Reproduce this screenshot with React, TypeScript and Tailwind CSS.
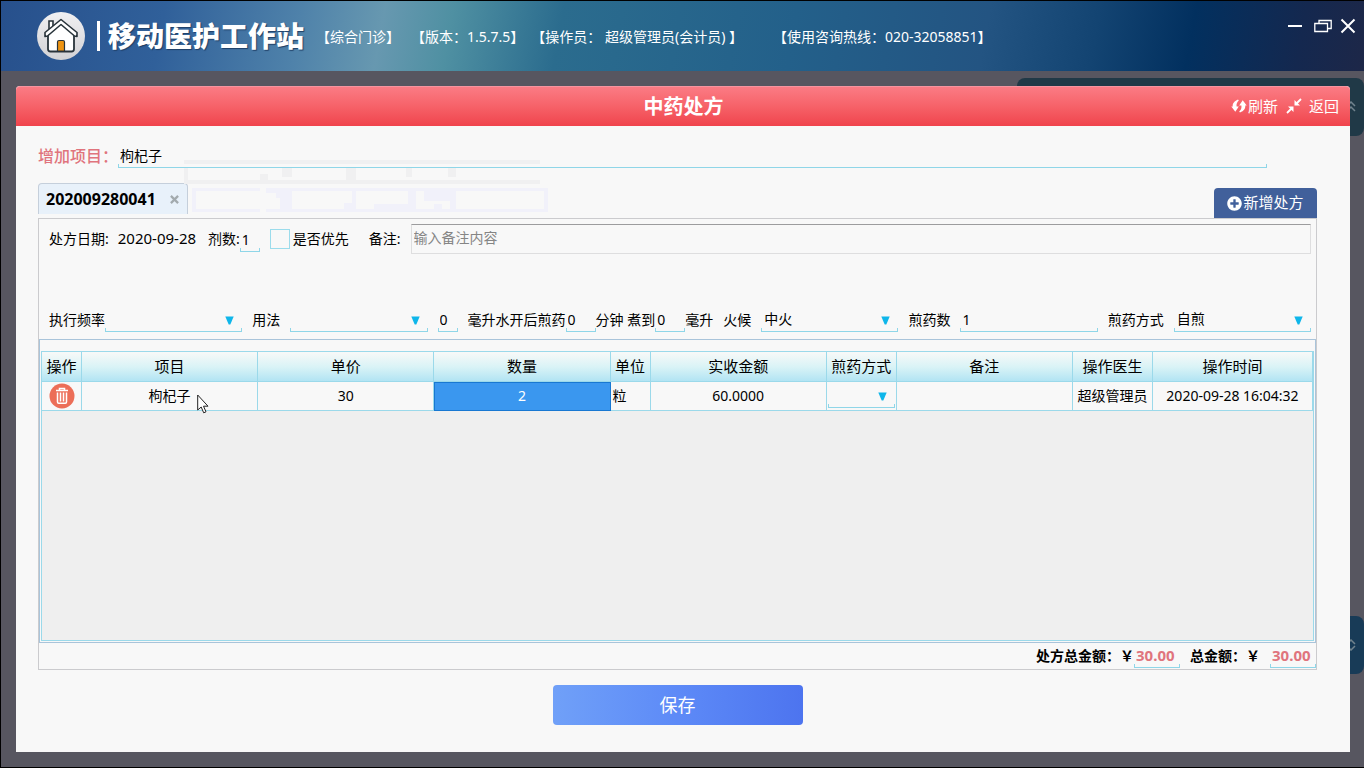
import type { ReactNode, SVGProps } from "react";
import { FaPlusCircle } from "react-icons/fa";

const field = "block w-full min-w-0 bg-transparent pb-[2px] outline-none";

function Underline() {
  return <span aria-hidden className="-mt-1 block h-1 border-x border-b border-[#8fd6e8]" />;
}

function TextField({ id, label, value, className }: { id: string; label: string; value: string; className: string }) {
  return (
    <div className={className}>
      <input id={id} aria-label={label} defaultValue={value} className={`${field} h-6 pl-[2px]`} />
      <Underline />
    </div>
  );
}

function SelectField({ id, label, value = "", className }: { id: string; label: string; value?: string; className: string }) {
  return (
    <div className={`relative ${className}`}>
      <select id={id} aria-label={label} defaultValue={value} className={`${field} h-6 appearance-none pl-[3px]`}>
        <option value={value}>{value}</option>
      </select>
      <Caret className="absolute right-2 top-2" />
      <Underline />
    </div>
  );
}

function Caret({ className }: { className: string }) {
  return (
    <svg viewBox="0 0 9 9" className={`pointer-events-none size-[9px] ${className}`} aria-hidden>
      <path d="M.3.500h8.400L5.300 8.500H3.700z" fill="#0fb6ea" />
    </svg>
  );
}

function HomeIcon(props: SVGProps<SVGSVGElement>) {
  return (
    <svg viewBox="0 0 48 48" aria-hidden {...props}>
      <defs>
        <linearGradient id="disc" x1="0" y1="0" x2="0" y2="1">
          <stop offset="0" stopColor="#f0f0f2" />
          <stop offset="1" stopColor="#d2d2d5" />
        </linearGradient>
      </defs>
      <circle cx="24" cy="24" r="24" fill="url(#disc)" />
      <path d="M12 17V9h4v6" fill="#fff" stroke="#28333a" strokeWidth="1.600" />
      <path d="M11 22v15q0 2.500 2.500 2.500h21q2.500 0 2.500-2.500V22L24 11z" fill="#fff" stroke="#28333a" strokeWidth="1.800" />
      <path d="M8 24.500v-4L24 7.500l16 13v4l-2.500-.5L24 12.500 10.500 24z" fill="#fff" stroke="#28333a" strokeWidth="1.600" strokeLinejoin="round" />
      <path d="M20.500 39V30q0-1.500 1.500-1.500h4q1.500 0 1.500 1.500v9z" fill="#ee9412" stroke="#28333a" strokeWidth="1.200" />
    </svg>
  );
}

function RefreshIcon() {
  return (
    <svg viewBox="0 0 16 16" className="size-4" fill="#fff" aria-hidden>
      <path d="M7 1.500C3 3 1.300 6 1.800 8.500H.3l4 5.300 3.500-5.300H5.600C5.200 6 6 4 7.800 2.500z" />
      <path d="M9 14.500c4-1.500 5.700-4.500 5.200-7h1.500l-4-5.300L8.200 7.500h2.200c.4 2.500-.4 4.500-2.200 6z" />
    </svg>
  );
}

function ShrinkIcon() {
  return (
    <svg viewBox="0 0 16 16" className="size-4" aria-hidden>
      <path d="M15 1l-5 5M1 15l5-5" stroke="#fff" strokeWidth="1.800" />
      <path d="M8.500 2v5.500H14zM7.500 14V8.500H2z" fill="#fff" />
    </svg>
  );
}

function TrashIcon() {
  return (
    <svg viewBox="0 0 26 26" className="size-[26px]" aria-hidden>
      <circle cx="13" cy="13" r="12.500" fill="#ec6e58" />
      <path d="M7 7.500h12M10.500 7V5.500h5V7" fill="none" stroke="#fff" strokeWidth="1.500" />
      <path d="M8.500 9.500v9.500q0 1.200 1.200 1.200h6.600q1.200 0 1.200-1.200V9.500M11.500 9.500v9M14.500 9.500v9" fill="none" stroke="#fff" strokeWidth="1.500" />
    </svg>
  );
}

function TitleBar() {
  return (
    <header className="flex h-[70px] shrink-0 items-center bg-[linear-gradient(100deg,#27508c_0%,#30609a_12%,#4f82aa_22%,#6798b0_28%,#4f90a2_33%,#2b6c8e_41%,#23608a_58%,#235482_72%,#134472_80%,#02305f_87%,#14284f_95%,#1d2748_100%)] pl-9 pr-2 text-sm text-white">
      <HomeIcon className="size-12 shrink-0" />
      <span className="ml-3 h-[30px] w-[3px] bg-white" />
      <h1 className="ml-2 whitespace-nowrap text-[28px] font-black [text-shadow:1px_1px_1px_#1f3f66]">移动医护工作站</h1>
      <p className="ml-2 mt-[2px] flex whitespace-pre">
        <span className="ml-1">【综合门诊】</span>
        <span className="ml-[11px]">【版本：1.5.7.5】</span>
        <span className="ml-[7px]">【操作员： 超级管理员(会计员) 】</span>
        <span className="ml-[30px]">【使用咨询热线：020-32058851】</span>
      </p>
      <div className="mb-5 ml-auto flex items-center gap-3">
        <button aria-label="最小化" className="h-4 w-[14px]">
          <span className="block h-[2px] bg-white" />
        </button>
        <button aria-label="还原">
          <svg viewBox="0 0 18 14" className="block h-[14px] w-[18px]" fill="none" stroke="#fff" strokeWidth="1.300">
            <path d="M.8 4.500h12.700v8H.8zM5 4.500v-3h12.200v8h-3.700" />
          </svg>
        </button>
        <button aria-label="关闭" className="-ml-1">
          <svg viewBox="0 0 16 16" className="block size-4" stroke="#fff" strokeWidth="2">
            <path d="M1.500 1.500l13 13M14.500 1.500l-13 13" />
          </svg>
        </button>
      </div>
    </header>
  );
}

function DecoctionRow() {
  return (
    <div className="flex h-6 items-center whitespace-nowrap">
      <label htmlFor="frequency">执行频率</label>
      <SelectField id="frequency" label="执行频率" className="flex-1" />
      <label htmlFor="usage" className="mx-[10px]">用法</label>
      <SelectField id="usage" label="用法" className="flex-1" />
      <TextField id="water" label="水量" value="0" className="ml-[10px] w-5" />
      <label htmlFor="water" className="ml-[10px]">毫升水开后煎药</label>
      <TextField id="minutes" label="分钟" value="0" className="w-[30px]" />
      <label htmlFor="minutes">分钟 煮到</label>
      <TextField id="volume" label="毫升" value="0" className="w-[30px]" />
      <label htmlFor="volume">毫升</label>
      <label htmlFor="heat" className="mx-[10px]">火候</label>
      <SelectField id="heat" label="火候" value="中火" className="flex-1" />
      <label htmlFor="batches" className="mx-[10px]">煎药数</label>
      <TextField id="batches" label="煎药数" value="1" className="flex-1" />
      <label htmlFor="method" className="mx-[10px]">煎药方式</label>
      <SelectField id="method" label="煎药方式" value="自煎" className="flex-1" />
    </div>
  );
}

const columns = [
  { name: "操作", width: "w-10" },
  { name: "项目", width: "" },
  { name: "单价", width: "" },
  { name: "数量", width: "" },
  { name: "单位", width: "w-10" },
  { name: "实收金额", width: "" },
  { name: "煎药方式", width: "w-[70px]" },
  { name: "备注", width: "" },
  { name: "操作医生", width: "w-20" },
  { name: "操作时间", width: "w-40" },
];

function Cell({ children, className = "" }: { children?: ReactNode; className?: string }) {
  return <td className={`border-b border-r border-[#9bd9ea] p-0 text-center ${className}`}>{children}</td>;
}

function ItemTable() {
  return (
    <table className="w-full table-fixed border-separate border-spacing-0 whitespace-nowrap bg-[#f8f8f8]">
      <thead>
        <tr className="h-[30px] bg-linear-to-b from-[#f8f9f8] via-[#d9f3f6] to-[#afe3f3] text-[15px]">
          {columns.map((column) => (
            <th key={column.name} className={`border-b border-r border-[#9bd9ea] p-0 font-normal ${column.width}`}>{column.name}</th>
          ))}
        </tr>
      </thead>
      <tbody>
        <tr className="h-[29px]">
          <Cell>
            <button aria-label="删除" className="mx-auto block"><TrashIcon /></button>
          </Cell>
          <Cell>枸杞子</Cell>
          <Cell>30</Cell>
          <Cell className="bg-[#3a97ef] text-white outline -outline-offset-1 outline-[#1878d2]">2</Cell>
          <Cell className="pl-[2px] text-left">粒</Cell>
          <Cell>60.0000</Cell>
          <Cell><SelectField id="row-method" label="煎药方式" className="mx-px" /></Cell>
          <Cell />
          <Cell>超级管理员</Cell>
          <Cell>2020-09-28 16:04:32</Cell>
        </tr>
      </tbody>
    </table>
  );
}

function Prescription() {
  return (
    <section className="flex flex-1 flex-col border border-[#cbcbce]">
      <div className="flex items-start whitespace-nowrap pl-[10px] pr-[5px] pt-[5px]">
        <span className="mt-[5px]">处方日期:</span>
        <span className="ml-[9px] mt-1 text-[15px]">2020-09-28</span>
        <label htmlFor="doses" className="ml-3 mt-[5px]">剂数:</label>
        <TextField id="doses" label="剂数" value="1" className="mt-1 w-5" />
        <input id="priority" type="checkbox" className="ml-[10px] mt-[5px] size-5 appearance-none border border-[#9bdcec] bg-[#f8f8f8]" />
        <label htmlFor="priority" className="ml-[3px] mt-[5px]">是否优先</label>
        <label htmlFor="remark" className="ml-5 mt-[5px]">备注:</label>
        <input
          id="remark"
          placeholder="输入备注内容"
          className="ml-[10px] h-[30px] min-w-0 flex-1 border border-[#dededf] border-t-[#9c9c9e] bg-[#f8f8f8] pb-[3px] pl-[2px] placeholder:text-[#858585]"
        />
      </div>
      <div className="mt-[54px] pl-[10px] pr-[5px]">
        <DecoctionRow />
      </div>
      <div className="mt-[7px] flex flex-1 flex-col border border-[#a9c4da] px-px pb-px pt-[11px]">
        <div className="flex-1 border border-[#9bd9ea] bg-[#efefef]">
          <ItemTable />
        </div>
      </div>
      <div className="flex h-[26px] items-center justify-end font-bold">
        <span>处方总金额：￥</span>
        <Amount label="处方总金额" />
        <span className="ml-[10px]">总金额：￥</span>
        <span className="w-[10px]" />
        <Amount label="总金额" />
      </div>
    </section>
  );
}

function Amount({ label }: { label: string }) {
  return (
    <div className="w-[46px]">
      <input readOnly aria-label={label} value="30.00" className={`${field} h-6 pl-[2px] text-[15px] font-bold text-[#e0747d]`} />
      <Underline />
    </div>
  );
}

function Pointer() {
  return (
    <svg viewBox="0 0 12 20" className="pointer-events-none absolute left-[196px] top-[393px] h-5 w-3" aria-hidden>
      <path d="M.7 1v15l3.500-3 2.500 5.800 2.300-1L6.500 12.200H11z" fill="#fff" stroke="#222" />
    </svg>
  );
}

// last frame of the suggestion list while it fades out
function FadingSuggestions() {
  return (
    <svg viewBox="0 0 364 52" className="pointer-events-none absolute left-[183px] top-[159px] h-[52px] w-[364px]" aria-hidden>
      <path d="M0 0h356v4H0zM0 8h4v12h352v4H0zM76 14h8v6h-8zM98 8h10v9H98zM162 8h10v12h-10zM222 8h6v9h-6zM264 8h8v9h-8z" fill="#f0f0f1" />
      <path
        d="M8 28h68v3H12v18h64v3H8zM82 28h282v24H82v-3h14V38h-4v-5H82zM108 31v18h52v-6h8V31zM172 44v5h86v-5h-8v5h-60v-5h34V31h-52zM240 31v10h26v8h-34V31zM272 31v18h88V31z"
        fill="#f1f1fa"
        fillRule="evenodd"
      />
    </svg>
  );
}

function EdgeTab({ className, points }: { className: string; points: string }) {
  return (
    <div aria-hidden className={`absolute right-0 flex h-[58px] items-center justify-end rounded-lg pr-2 ${className}`}>
      <svg viewBox="0 0 10 12" className="h-3 w-[10px]" fill="none" stroke="#71838e" strokeWidth="1.500">
        <path d={points} />
      </svg>
    </div>
  );
}

export default function App() {
  return (
    <div className="relative flex min-h-screen flex-col border border-r-0 border-black bg-[#575660] font-['Noto_Sans','Noto_Sans_CJK_SC',sans-serif] text-sm text-black">
      <TitleBar />
      <EdgeTab className="top-[77px] w-[347px] bg-[#203947]" points="M1 5l4-4 4 4M1 10l4-4 4 4" />
      <EdgeTab className="top-[615px] w-[60px] bg-[#183b57]" points="M1 5l4-4 4 4M1 7l4 4 4-4" />
      <main className="relative mb-[15px] ml-[15px] mr-[14px] mt-[15px] flex flex-1 flex-col rounded-t bg-[#f8f8f8]">
        <div className="flex h-10 items-center rounded-t border-t border-[#f694a0] bg-linear-to-b from-[#fb7b84] to-[#f0434c] text-white">
          <div className="flex-1 pl-3" />
          <h2 className="text-xl font-bold">中药处方</h2>
          <div className="flex flex-1 items-center justify-end pr-[11px] text-[15px]">
            <button className="flex items-center gap-px"><RefreshIcon />刷新</button>
            <button className="ml-2 flex items-center gap-[7px]"><ShrinkIcon />返回</button>
          </div>
        </div>
        <div className="flex flex-1 flex-col pb-[27px] pl-[22px] pr-[33px] pt-[18px]">
          <div className="flex h-6 items-center pr-[50px]">
            <label htmlFor="new-item" className="w-20 text-base font-medium text-[#e0747d]">增加项目：</label>
            <TextField id="new-item" label="增加项目" value="枸杞子" className="flex-1" />
          </div>
          <div className="mt-[15px] flex h-[35px] items-start justify-between">
            <div className="flex h-[31px] w-[150px] items-center justify-between rounded-t border border-b-0 border-[#c5cfdb] bg-[#e8f1fa] pl-[7px] pr-2">
              <button className="text-base font-bold">202009280041</button>
              <button aria-label="关闭标签">
                <svg viewBox="0 0 10 10" className="size-[9px]" stroke="#a3aaae" strokeWidth="2.500"><path d="M1 1l8 8M9 1L1 9" /></svg>
              </button>
            </div>
            <button className="mt-[5px] flex h-[30px] w-[103px] items-center justify-center gap-px rounded-t-sm bg-[#41609b] text-[15px] text-white">
              <FaPlusCircle size={15} />新增处方
            </button>
          </div>
          <Prescription />
          <button className="mt-[15px] h-10 w-[250px] self-center rounded-sm bg-linear-to-r from-[#70a0f8] via-[#5d8af7] to-[#4d74ef] text-lg text-white">保存</button>
        </div>
      </main>
      <FadingSuggestions />
      <Pointer />
    </div>
  );
}
